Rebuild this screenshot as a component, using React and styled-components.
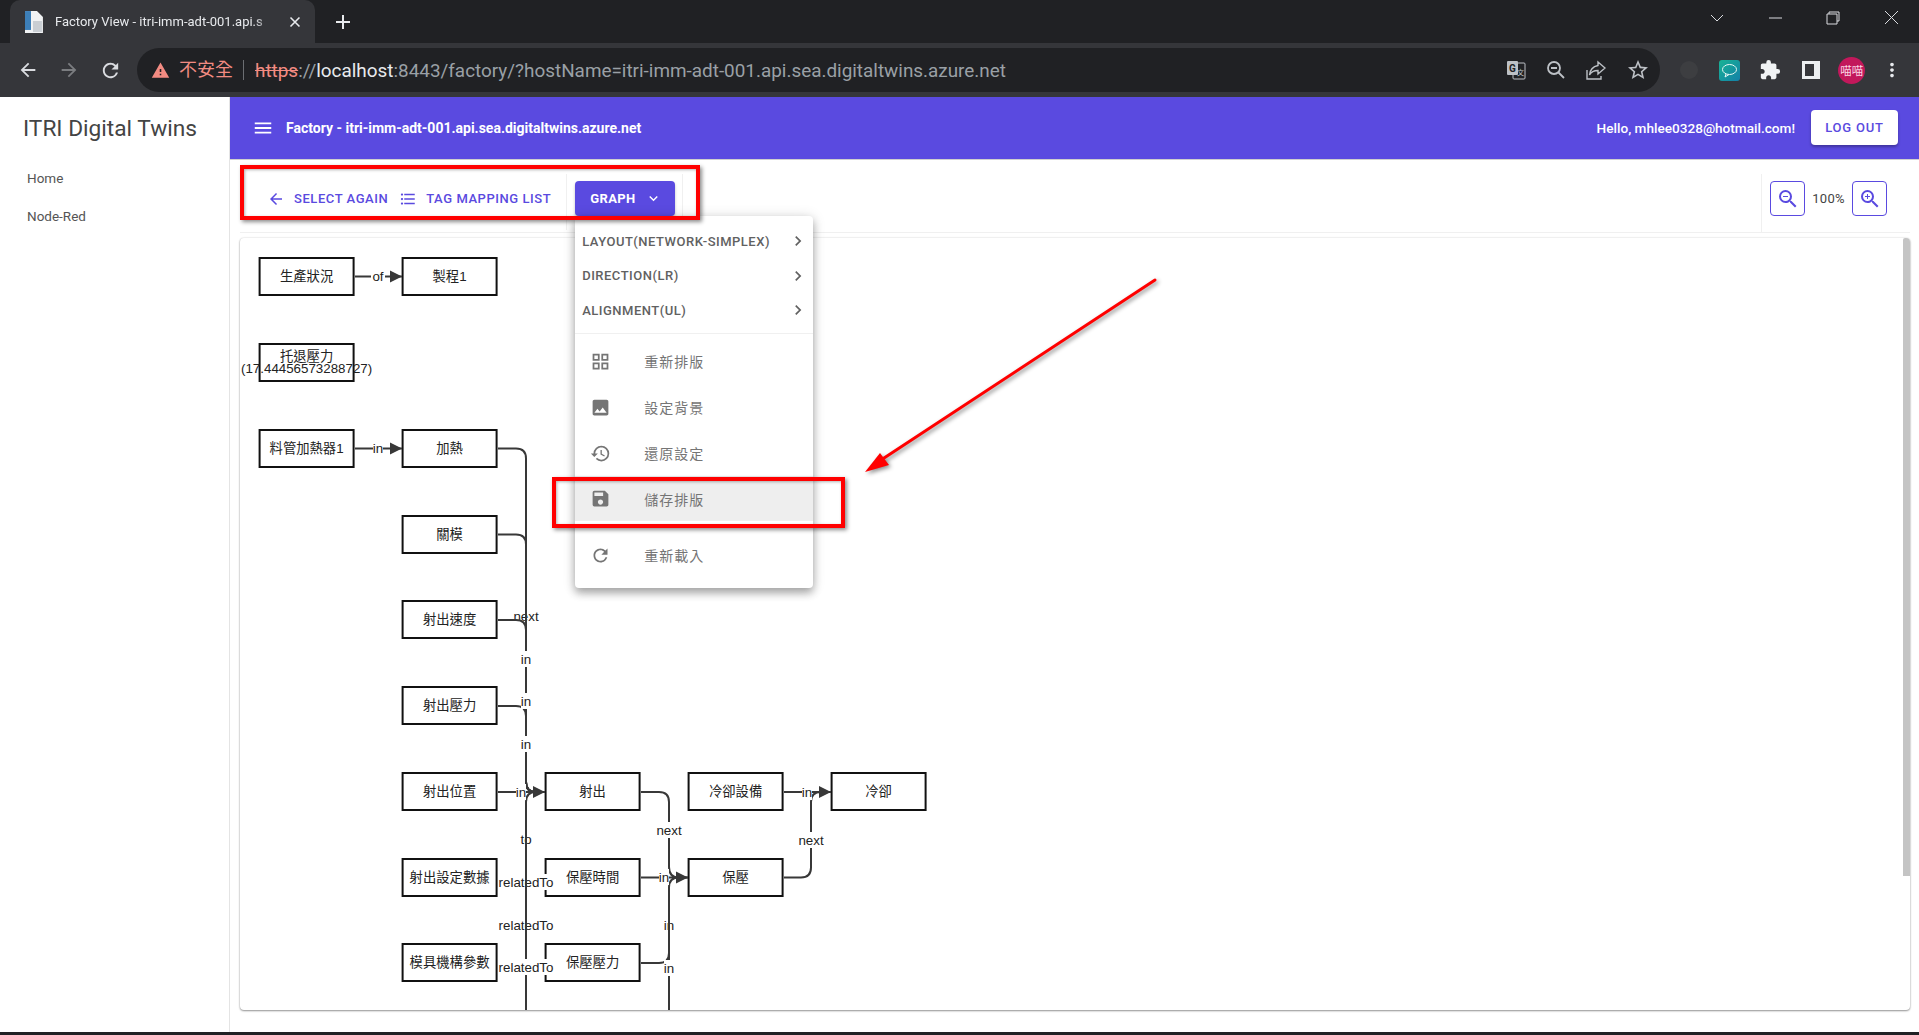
import styled, { createGlobalStyle } from "styled-components";
import {
  MdArrowBack,
  MdArrowForward,
  MdChevronRight,
  MdExpandMore,
  MdExtension,
  MdFormatListBulleted,
  MdHistory,
  MdImage,
  MdMenu,
  MdMoreVert,
  MdOutlineGridView,
  MdRefresh,
  MdSave,
  MdStarBorder,
  MdWarning,
  MdZoomIn,
  MdZoomOut,
} from "react-icons/md";

const PURPLE = "#5a4ae0";
const CJK = `"Noto Sans CJK TC", sans-serif`;

const GlobalStyle = createGlobalStyle`
  html, body { margin: 0; padding: 0; height: 100%; overflow: hidden; background: #fff; }
  body { font-family: Roboto, "Noto Sans CJK TC", sans-serif; }
  * { box-sizing: border-box; }
`;

const Screen = styled.div`
  position: relative;
  display: flex;
  flex-direction: column;
  height: 100vh;
  overflow: hidden;
`;

/* browser chrome */
const TabStrip = styled.div`
  flex: 0 0 43px;
  display: flex;
  align-items: flex-end;
  padding-left: 10px;
  background: #202124;
  color: #e8eaed;
`;

const Tab = styled.div`
  width: 305px;
  height: 43px;
  display: flex;
  align-items: center;
  padding: 0 14px 0 14px;
  background: #35363a;
  border-radius: 10px 10px 0 0;
`;

const TabTitle = styled.div`
  width: 222px;
  margin: 0 13px 0 11px;
  font-size: 13px;
  white-space: nowrap;
  -webkit-mask-image: linear-gradient(90deg, #000 90%, transparent);
  mask-image: linear-gradient(90deg, #000 90%, transparent);
`;

const NewTab = styled.div`
  margin-left: 19px;
  height: 43px;
  display: flex;
  align-items: center;
`;

const WindowControls = styled.div`
  margin-left: auto;
  height: 36px;
  display: flex;
  align-items: center;
  gap: 42px;
  padding-right: 20px;
  align-self: flex-start;
`;

const BrowserBar = styled.div`
  flex: 0 0 54px;
  display: flex;
  align-items: center;
  background: #35363a;
  color: #dadce0;
`;

const NavButtons = styled.div`
  width: 137px;
  display: flex;
  align-items: center;
  gap: 19px;
  padding-left: 17px;
`;

const Omnibox = styled.div`
  width: 1523px;
  height: 44px;
  display: flex;
  align-items: center;
  padding-left: 14px;
  background: #202124;
  border-radius: 22px;
`;

const SecurityText = styled.span`
  margin-left: 9px;
  padding-right: 10px;
  border-right: 1px solid #6b6e72;
  font-size: 18px;
  line-height: 20px;
  color: #f28b82;
`;

const Url = styled.div`
  margin-left: 11px;
  font-size: 18.9px;
  color: #9aa0a6;
  white-space: nowrap;
  s { color: #f28b82; }
  b { font-weight: 400; color: #e8eaed; }
`;

const OmniActions = styled.div`
  margin-left: auto;
  display: flex;
  align-items: center;
  gap: 20px;
  padding-right: 10px;
  color: #bdc1c6;
`;

const ExtensionTray = styled.div`
  flex: 1;
  display: flex;
  align-items: center;
  padding-left: 9px;
`;

const TrayItem = styled.div`
  flex: 0 0 40.6px;
  display: flex;
  align-items: center;
  justify-content: center;
`;

const Avatar = styled.div`
  flex: none;
  width: 27px;
  height: 27px;
  display: flex;
  align-items: center;
  justify-content: center;
  border-radius: 50%;
  background: #c2185b;
  color: #fbd5e3;
  font-size: 11.5px;
  white-space: nowrap;
`;

/* page */
const Page = styled.div`
  flex: 1;
  min-height: 0;
  display: flex;
  background: #fff;
`;

const Sidebar = styled.aside`
  flex: 0 0 230px;
  border-right: 1px solid #e4e4e4;
  color: #555;
`;

const Brand = styled.div`
  height: 62px;
  padding-left: 23px;
  display: flex;
  align-items: center;
  font-size: 22.7px;
  color: #444;
`;

const NavItem = styled.div`
  height: 38px;
  display: flex;
  align-items: center;
  padding-left: 27px;
  font-size: 13.5px;
`;

const Main = styled.main`
  flex: 1;
  min-width: 0;
  display: flex;
  flex-direction: column;
`;

const AppBar = styled.header`
  flex: 0 0 63px;
  display: flex;
  align-items: center;
  padding: 0 21px 1px 22px;
  background: ${PURPLE};
  border-bottom: 1px solid #cfcfcf;
  color: #fff;
`;

const AppTitle = styled.div`
  margin-left: 12px;
  font-size: 14px;
  font-weight: 700;
`;

const Greeting = styled.div`
  margin-left: auto;
  font-size: 13.6px;
  font-weight: 500;
`;

const LogOut = styled.button`
  width: 87px;
  height: 35px;
  margin-left: 16px;
  border: 0;
  border-radius: 4px;
  background: #fff;
  color: ${PURPLE};
  font: 500 13px Roboto, sans-serif;
  letter-spacing: 0.8px;
  box-shadow: 0 2px 3px rgba(0, 0, 0, 0.3);
`;

const Content = styled.div`
  flex: 1;
  min-height: 0;
  display: flex;
  flex-direction: column;
  padding: 0 9px 22px 10px;
`;

const Toolbar = styled.div`
  flex: 0 0 73px;
  display: flex;
  align-items: center;
  padding: 5px 23px 0 19px;
  border-bottom: 1px solid #f0f0f0;
`;

const TextButton = styled.button`
  height: 35px;
  display: flex;
  align-items: center;
  gap: 9px;
  padding: 0 ${({ $end }) => $end}px 0 8px;
  border: 0;
  background: none;
  color: ${PURPLE};
  font: 500 13px Roboto, sans-serif;
  letter-spacing: 0.55px;
  white-space: nowrap;
  svg { font-size: 18px; }
`;

const Divider = styled.div`
  align-self: stretch;
  width: 1px;
  margin: 9px 0 2px;
  background: #f0f0f0;
`;

const MenuAnchor = styled.div`
  position: relative;
  margin: 0 7px 0 8px;
`;

const GraphButton = styled.button`
  width: 100px;
  height: 35px;
  display: flex;
  align-items: center;
  gap: 9px;
  padding: 0 0 0 15px;
  border: 0;
  border-radius: 4px;
  background: ${PURPLE};
  color: #fff;
  font: 700 13px Roboto, sans-serif;
  letter-spacing: 0.4px;
  box-shadow: 0 2px 3px rgba(0, 0, 0, 0.25);
  svg { font-size: 17px; }
`;

const Menu = styled.div`
  position: absolute;
  top: 100%;
  left: 0;
  z-index: 2;
  width: 238px;
  height: 372px;
  padding-top: 8px;
  background: #fff;
  border-radius: 4px;
  box-shadow: 0 5px 8px rgba(0, 0, 0, 0.3), 0 1px 14px rgba(0, 0, 0, 0.14);
`;

const SubmenuRow = styled.div`
  height: 34.5px;
  display: flex;
  align-items: center;
  justify-content: space-between;
  padding: 0 5px 0 7px;
  font-size: 13px;
  font-weight: 500;
  letter-spacing: 0.5px;
  color: #616161;
  svg { font-size: 20px; }
`;

const MenuRule = styled.div`
  height: 1px;
  margin: 5px 0 4.5px;
  background: #f0f0f0;
`;

const MenuRow = styled.div`
  height: ${({ $h }) => $h}px;
  display: flex;
  align-items: center;
  gap: 33px;
  padding-left: 15px;
  background: ${({ $active }) => ($active ? "#eeeeee" : "transparent")};
  color: #757575;
  font-family: ${CJK};
  font-size: 14px;
  letter-spacing: 1px;
  svg { font-size: 21px; flex: none; }
`;

const ZoomGroup = styled.div`
  margin-left: auto;
  align-self: stretch;
  display: flex;
  align-items: center;
  margin-top: 9px;
  padding: 0 0 9px 8px;
  border-left: 1px solid #f0f0f0;
`;

const ZoomButton = styled.button`
  width: 35px;
  height: 35px;
  display: flex;
  align-items: center;
  justify-content: center;
  padding: 0;
  border: 1px solid ${PURPLE};
  border-radius: 4px;
  background: #fff;
  color: ${PURPLE};
  font-size: 24px;
`;

const ZoomValue = styled.div`
  width: 47px;
  text-align: center;
  font-size: 13px;
  letter-spacing: 0.3px;
  color: #444;
`;

const GraphCard = styled.section`
  position: relative;
  flex: 1;
  min-height: 0;
  margin-top: 5px;
  overflow: hidden;
  border-radius: 4px;
  box-shadow: 0 1px 2px rgba(0, 0, 0, 0.4), 0 0 2px rgba(0, 0, 0, 0.15);
`;

const ScrollThumb = styled.div`
  position: absolute;
  top: 0;
  right: 0;
  width: 7px;
  height: 638px;
  background: #c4c4c4;
  border-radius: 2px 2px 0 0;
`;

const GraphSvg = styled.svg`
  display: block;
  width: 100%;
  height: 100%;
`;

const NodeBox = styled.rect`
  fill: #fff;
  stroke: #111;
  stroke-width: 2;
`;

const NodeText = styled.text`
  font-family: "Liberation Sans", "Noto Sans CJK TC", sans-serif;
  font-size: 13.33px;
  fill: #222;
  text-anchor: middle;
  dominant-baseline: central;
`;

const EdgeLine = styled.path`
  fill: none;
  stroke: #383838;
  stroke-width: 2;
`;

const BottomEdge = styled.div`
  flex: 0 0 3px;
  background: #202124;
`;

/* annotations laid over the screenshot */
const Highlight = styled.div`
  position: absolute;
  z-index: 3;
  left: ${({ $x }) => $x}px;
  top: ${({ $y }) => $y}px;
  width: ${({ $w }) => $w}px;
  height: ${({ $h }) => $h}px;
  border: 4px solid #f00;
  box-shadow: 2px 2px 4px rgba(0, 0, 0, 0.45), inset 1px 1px 3px rgba(0, 0, 0, 0.3);
  pointer-events: none;
`;

const CalloutArrow = styled.svg`
  position: absolute;
  z-index: 3;
  left: 860px;
  top: 275px;
  filter: drop-shadow(2px 2px 2px rgba(0, 0, 0, 0.45));
`;

const NODES = [
  [259, 257, "生產狀況"],
  [402, 257, "製程1"],
  [259, 429, "料管加熱器1"],
  [402, 429, "加熱"],
  [402, 515, "關模"],
  [402, 600, "射出速度"],
  [402, 686, "射出壓力"],
  [402, 772, "射出位置"],
  [402, 858, "射出設定數據"],
  [402, 943, "模具機構參數"],
  [545, 772, "射出"],
  [545, 858, "保壓時間"],
  [545, 943, "保壓壓力"],
  [688, 772, "冷卻設備"],
  [688, 858, "保壓"],
  [831, 772, "冷卻"],
];

const EDGES = [
  "M355 276.5H402",
  "M355 448.5H402",
  "M498 448.5H516Q526 448.5 526 458.5V782Q526 792 536 792H545",
  "M498 534.5H516Q526 534.5 526 544.5V782Q526 792 536 792",
  "M498 620H516Q526 620 526 630V782Q526 792 536 792",
  "M498 706H516Q526 706 526 716V782Q526 792 536 792",
  "M498 792H545",
  "M526 1010V802Q526 792 536 792",
  "M641 792H659Q669 792 669 802V867Q669 877.5 679 877.5H688",
  "M641 877.5H688",
  "M641 963H659Q669 963 669 953V887.5Q669 877.5 679 877.5",
  "M669 1010V887.5",
  "M784 792H831",
  "M784 877.5H801Q811 877.5 811 867.5V802Q811 792 821 792",
];

const ARROW_TIPS = [
  [402, 276.5],
  [402, 448.5],
  [545, 792],
  [688, 877.5],
  [831, 792],
];

// labels under the edges have the line drawn across them
const LABELS = [
  { x: 378, y: 276, t: "of", w: 14 },
  { x: 378, y: 448, t: "in", w: 10 },
  { x: 526, y: 616, t: "next", w: 26, under: true },
  { x: 526, y: 659, t: "in", w: 10 },
  { x: 526, y: 701, t: "in", w: 10 },
  { x: 526, y: 744, t: "in", w: 10 },
  { x: 521, y: 792, t: "in", w: 10 },
  { x: 526, y: 839, t: "to", w: 12, under: true },
  { x: 526, y: 882, t: "relatedTo", w: 56, under: true },
  { x: 526, y: 925, t: "relatedTo", w: 56, under: true },
  { x: 526, y: 967, t: "relatedTo", w: 56 },
  { x: 664, y: 877, t: "in", w: 10 },
  { x: 669, y: 830, t: "next", w: 26 },
  { x: 669, y: 925, t: "in", w: 10, under: true },
  { x: 669, y: 968, t: "in", w: 10 },
  { x: 807, y: 792, t: "in", w: 10 },
  { x: 811, y: 840, t: "next", w: 26 },
];

function EdgeLabel({ x, y, t, w }) {
  return (
    <g>
      <rect x={x - w / 2} y={y - 8} width={w} height={16} fill="#fff" />
      <NodeText x={x} y={y}>
        {t}
      </NodeText>
    </g>
  );
}

function FactoryGraph() {
  return (
    <GraphSvg viewBox="240 238 1670 772" preserveAspectRatio="xMinYMin slice">
      {NODES.map(([x, y, t]) => (
        <g key={`${x}-${y}`}>
          <NodeBox x={x + 0.6} y={y + 1} width={94} height={37} />
          <NodeText x={x + 47.6} y={y + 19}>
            {t}
          </NodeText>
        </g>
      ))}
      <NodeBox x={259.6} y={344} width={94} height={37} />
      <NodeText x={306.6} y={356}>
        托退壓力
      </NodeText>
      <NodeText x={306.6} y={368}>
        (17.44456573288727)
      </NodeText>
      {LABELS.filter((l) => l.under).map((l) => (
        <EdgeLabel key={`${l.x}-${l.y}`} {...l} />
      ))}
      {EDGES.map((d) => (
        <EdgeLine key={d} d={d} />
      ))}
      {ARROW_TIPS.map(([x, y]) => (
        <polygon
          key={`${x}-${y}`}
          points={`${x},${y} ${x - 12},${y - 6} ${x - 12},${y + 6}`}
          fill="#383838"
        />
      ))}
      {LABELS.filter((l) => !l.under).map((l) => (
        <EdgeLabel key={`${l.x}-${l.y}`} {...l} />
      ))}
    </GraphSvg>
  );
}

function TabIcon() {
  return (
    <svg width="20" height="24" viewBox="0 0 20 24">
      <path d="M1 1h12l6 6v16H1z" fill="#f1f3f4" />
      <path d="M1 1h6v19H1z" fill="#3d7fb8" />
      <path d="M9 11h9v11H9z" fill="#c9ced3" />
    </svg>
  );
}

function WindowIcon({ d }) {
  return (
    <svg width="16" height="16" viewBox="0 0 16 16" fill="none" stroke="#dadce0" strokeWidth="1">
      <path d={d} />
    </svg>
  );
}

function TranslateIcon() {
  return (
    <svg width="20" height="20" viewBox="0 0 20 20">
      <rect x="7" y="3" width="12" height="16" rx="1" fill="none" stroke="#bdc1c6" />
      <rect x="1" y="1" width="11" height="14" rx="1" fill="#bdc1c6" />
      <text x="6.5" y="12" fontSize="10" fontWeight="700" textAnchor="middle" fill="#202124" fontFamily="Roboto">
        G
      </text>
      <text x="14.5" y="15" fontSize="7" textAnchor="middle" fill="#bdc1c6" fontFamily="Noto Sans CJK TC">
        文
      </text>
    </svg>
  );
}

function MagnifierIcon() {
  return (
    <svg width="20" height="20" viewBox="0 0 20 20" fill="none" stroke="#bdc1c6" strokeWidth="1.8">
      <circle cx="8" cy="8" r="6" />
      <path d="M5 8h6M12.5 12.5L18 18" />
    </svg>
  );
}

function ShareIcon() {
  return (
    <svg width="20" height="20" viewBox="0 0 20 20" fill="none" stroke="#bdc1c6" strokeWidth="1.4">
      <path d="M1 10v9h14v-3" />
      <path d="M12 2l7 6-7 6v-3.5C8 10.5 5 12 3.5 15 4 10 7 6.5 12 5.5z" />
    </svg>
  );
}

function ChatExtensionIcon() {
  return (
    <svg width="21" height="21" viewBox="0 0 21 21">
      <defs>
        <linearGradient id="chatFill" x1="0" y1="0" x2="1" y2="1">
          <stop offset="0" stopColor="#19b394" />
          <stop offset="1" stopColor="#1380a8" />
        </linearGradient>
      </defs>
      <rect width="21" height="21" rx="3" fill="url(#chatFill)" />
      <ellipse cx="10.5" cy="9.5" rx="7" ry="5" fill="none" stroke="#e8f8f5" />
      <path d="M7 14l-1 3 4-2.5" fill="none" stroke="#e8f8f5" />
    </svg>
  );
}

function SidePanelIcon() {
  return (
    <svg width="18" height="18" viewBox="0 0 18 18">
      <rect width="18" height="18" fill="#eceff1" />
      <rect x="3" y="3" width="9" height="12" fill="#35363a" />
    </svg>
  );
}

const MENU_ACTIONS = [
  { label: "重新排版", icon: <MdOutlineGridView />, h: 46 },
  { label: "設定背景", icon: <MdImage />, h: 46 },
  { label: "還原設定", icon: <MdHistory />, h: 46 },
  { label: "儲存排版", icon: <MdSave />, h: 45, active: true },
  { label: "重新載入", icon: <MdRefresh />, h: 68 },
];

export default function App() {
  return (
    <Screen>
      <GlobalStyle />
      <TabStrip>
        <Tab>
          <TabIcon />
          <TabTitle>Factory View - itri-imm-adt-001.api.s</TabTitle>
          <svg width="12" height="12" viewBox="0 0 12 12" stroke="#e8eaed" strokeWidth="1.6">
            <path d="M1.5 1.5l9 9M10.5 1.5l-9 9" />
          </svg>
        </Tab>
        <NewTab>
          <svg width="18" height="18" viewBox="0 0 18 18" stroke="#e8eaed" strokeWidth="2">
            <path d="M9 2v14M2 9h14" />
          </svg>
        </NewTab>
        <WindowControls>
          <WindowIcon d="M2 5l6 6 6-6" />
          <WindowIcon d="M2 8h13" />
          <WindowIcon d="M2 4h10v10H2zM4 4V2h10v9h-2" />
          <WindowIcon d="M2 1l13 13M15 1L2 14" />
        </WindowControls>
      </TabStrip>
      <BrowserBar>
        <NavButtons>
          <MdArrowBack size={22} />
          <MdArrowForward size={22} color="#7b7d80" />
          <MdRefresh size={23} />
        </NavButtons>
        <Omnibox>
          <MdWarning size={19} color="#f28b82" />
          <SecurityText>不安全</SecurityText>
          <Url>
            <s>https</s>://<b>localhost</b>:8443/factory/?hostName=itri-imm-adt-001.api.sea.digitaltwins.azure.net
          </Url>
          <OmniActions>
            <TranslateIcon />
            <MagnifierIcon />
            <ShareIcon />
            <MdStarBorder size={24} />
          </OmniActions>
        </Omnibox>
        <ExtensionTray>
          <TrayItem>
            <svg width="18" height="18" viewBox="0 0 18 18">
              <circle cx="9" cy="9" r="9" fill="#3d3e41" />
            </svg>
          </TrayItem>
          <TrayItem>
            <ChatExtensionIcon />
          </TrayItem>
          <TrayItem>
            <MdExtension size={22} color="#f1f3f4" />
          </TrayItem>
          <TrayItem>
            <SidePanelIcon />
          </TrayItem>
          <TrayItem>
            <Avatar>喵喵</Avatar>
          </TrayItem>
          <TrayItem>
            <MdMoreVert size={22} color="#e8eaed" />
          </TrayItem>
        </ExtensionTray>
      </BrowserBar>

      <Page>
        <Sidebar>
          <Brand>ITRI Digital Twins</Brand>
          <nav>
            <NavItem>Home</NavItem>
            <NavItem>Node-Red</NavItem>
          </nav>
        </Sidebar>
        <Main>
          <AppBar>
            <MdMenu size={22} />
            <AppTitle>Factory - itri-imm-adt-001.api.sea.digitaltwins.azure.net</AppTitle>
            <Greeting>Hello, mhlee0328@hotmail.com!</Greeting>
            <LogOut>LOG OUT</LogOut>
          </AppBar>
          <Content>
            <Toolbar>
              <TextButton $end={3}>
                <MdArrowBack />
                SELECT AGAIN
              </TextButton>
              <TextButton $end={15}>
                <MdFormatListBulleted />
                TAG MAPPING LIST
              </TextButton>
              <Divider />
              <MenuAnchor>
                <GraphButton>
                  GRAPH
                  <MdExpandMore />
                </GraphButton>
                <Menu>
                  <SubmenuRow>
                    LAYOUT(NETWORK-SIMPLEX)
                    <MdChevronRight />
                  </SubmenuRow>
                  <SubmenuRow>
                    DIRECTION(LR)
                    <MdChevronRight />
                  </SubmenuRow>
                  <SubmenuRow>
                    ALIGNMENT(UL)
                    <MdChevronRight />
                  </SubmenuRow>
                  <MenuRule />
                  {MENU_ACTIONS.map((item) => (
                    <MenuRow key={item.label} $h={item.h} $active={item.active}>
                      {item.icon}
                      {item.label}
                    </MenuRow>
                  ))}
                </Menu>
              </MenuAnchor>
              <Divider />
              <ZoomGroup>
                <ZoomButton>
                  <MdZoomOut />
                </ZoomButton>
                <ZoomValue>100%</ZoomValue>
                <ZoomButton>
                  <MdZoomIn />
                </ZoomButton>
              </ZoomGroup>
            </Toolbar>
            <GraphCard>
              <FactoryGraph />
              <ScrollThumb />
            </GraphCard>
          </Content>
        </Main>
      </Page>
      <BottomEdge />

      <Highlight $x={240} $y={165} $w={460} $h={55} />
      <Highlight $x={552} $y={477} $w={293} $h={51} />
      <CalloutArrow width="300" height="200" viewBox="860 275 300 200">
        <path d="M1155 280L878 462" stroke="#f00" strokeWidth="3" strokeLinecap="round" fill="none" />
        <polygon points="865,472 880,453 889,465" fill="#f00" />
      </CalloutArrow>
    </Screen>
  );
}
